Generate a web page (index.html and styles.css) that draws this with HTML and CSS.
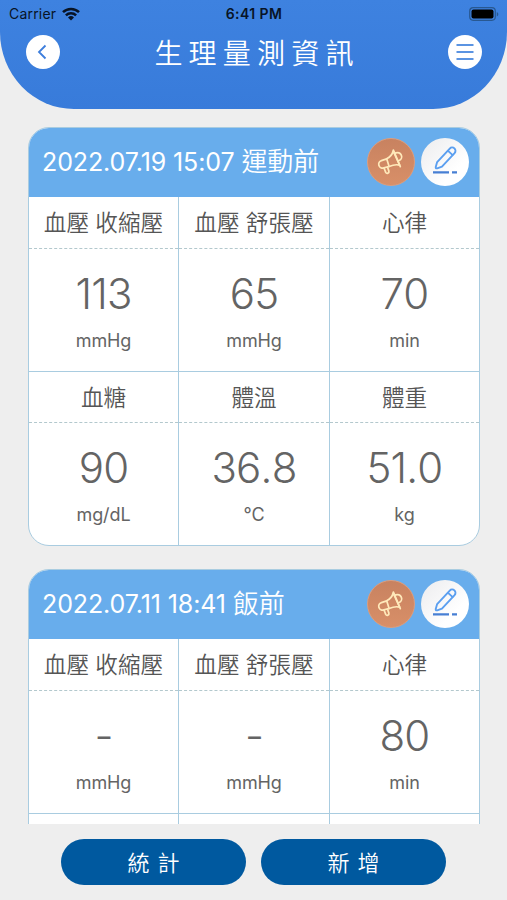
FILE: index.html
```html
<!DOCTYPE html>
<html lang="zh-Hant">

<head>
    <meta charset="utf-8">
    <meta name="viewport" content="width=device-width, initial-scale=1">
    <title>生理量測資訊</title>
    <link rel="stylesheet" href="styles.css">
</head>

<body>
    <svg class="defs" width="0" height="0">
        <symbol id="icon-horn" viewBox="0 0 48 48">
            <g fill="none" stroke="#ffe9ba" stroke-width="1.8" stroke-linejoin="round" stroke-linecap="round">
                <path d="M19.500 20.700l-5.500 1.800a4 4 0 0 0 2.500 7.700l5.500-1.500z" />
                <path d="M19.500 20.700c3.500-1.900 6-4.700 6.700-8.200L33 27.300c-3.500-1-7-.3-11 1.400" />
                <path d="M26.500 11.500l7.200 17.300M29 14.500a3.800 3.800 0 0 1 3.500 8" />
                <path d="M16.800 30.500l1.700 4.300c1 1.800 3.800.8 3.300-1.300l-1.500-4.300" />
            </g>
        </symbol>
        <symbol id="icon-edit" viewBox="0 0 48 48">
            <g transform="rotate(43 24 20.500)" fill="none" stroke="#5b9ff0" stroke-width="1.900" stroke-linejoin="round" stroke-linecap="round">
                <path d="M20.700 10a3.300 3.300 0 0 1 6.600 0v18.500l-2.300 4.500q-1 1.500-2 0l-2.300-4.500z" />
                <path d="M21 12.800h6" />
            </g>
            <path d="M12 34.300h16M31 34.300h5" fill="none" stroke="#477fd4" stroke-width="2.200" />
        </symbol>
    </svg>

    <header class="top">
        <div class="status">
            <span class="carrier">Carrier
                <svg width="18" height="14" viewBox="0 0 18 14">
                    <g fill="none" stroke="#081426" stroke-width="2.500">
                        <path d="M1 5.200a11.300 11.300 0 0 1 16 0" />
                        <path d="M3.900 8.300a7.200 7.200 0 0 1 10.200 0" />
                    </g>
                    <path d="M9 13.500l-3-3a4.300 4.300 0 0 1 6 0z" fill="#081426" />
                </svg>
            </span>
            <span class="time">6:41 PM</span>
            <svg class="battery" width="30" height="14" viewBox="0 0 30 14">
                <rect x=".7" y=".7" width="25.600" height="12.600" rx="3.500" fill="none" stroke="#285891" stroke-width="1.200" />
                <rect x="2.500" y="2.500" width="22" height="9" rx="2" fill="#000" />
                <path d="M27.800 5v4.500c2-.8 2-3.700 0-4.500" fill="#285891" />
            </svg>
        </div>
        <div class="bar">
            <button class="round" aria-label="back">
                <svg width="34" height="34" viewBox="0 0 34 34">
                    <path d="M19.500 10.500l-6.500 6.500 6.500 6.500" fill="none" stroke="#3d7edc" stroke-width="1.800" />
                </svg>
            </button>
            <h1>生理量測資訊</h1>
            <button class="round" aria-label="menu">
                <svg width="34" height="34" viewBox="0 0 34 34">
                    <path d="M8.500 10h17M8.500 17h17M8.500 24h17" fill="none" stroke="#5b94e2" stroke-width="2" />
                </svg>
            </button>
        </div>
    </header>

    <main class="list">
        <section class="card">
            <div class="card-head">
                <h2>2022.07.19 15:07 <span>運動前</span></h2>
                <button class="act horn" aria-label="horn"><svg><use href="#icon-horn" /></svg></button>
                <button class="act edit" aria-label="edit"><svg><use href="#icon-edit" /></svg></button>
            </div>
            <div class="grid">
                <div class="cell">
                    <div class="label">血壓 收縮壓</div>
                    <div class="value">113</div>
                    <div class="unit">mmHg</div>
                </div>
                <div class="cell">
                    <div class="label">血壓 舒張壓</div>
                    <div class="value">65</div>
                    <div class="unit">mmHg</div>
                </div>
                <div class="cell">
                    <div class="label">心律</div>
                    <div class="value">70</div>
                    <div class="unit">min</div>
                </div>
                <div class="cell">
                    <div class="label">血糖</div>
                    <div class="value">90</div>
                    <div class="unit">mg/dL</div>
                </div>
                <div class="cell">
                    <div class="label">體溫</div>
                    <div class="value">36.8</div>
                    <div class="unit">°C</div>
                </div>
                <div class="cell">
                    <div class="label">體重</div>
                    <div class="value">51.0</div>
                    <div class="unit">kg</div>
                </div>
            </div>
        </section>

        <section class="card">
            <div class="card-head">
                <h2>2022.07.11 18:41 <span>飯前</span></h2>
                <button class="act horn" aria-label="horn"><svg><use href="#icon-horn" /></svg></button>
                <button class="act edit" aria-label="edit"><svg><use href="#icon-edit" /></svg></button>
            </div>
            <div class="grid">
                <div class="cell">
                    <div class="label">血壓 收縮壓</div>
                    <div class="value">-</div>
                    <div class="unit">mmHg</div>
                </div>
                <div class="cell">
                    <div class="label">血壓 舒張壓</div>
                    <div class="value">-</div>
                    <div class="unit">mmHg</div>
                </div>
                <div class="cell">
                    <div class="label">心律</div>
                    <div class="value">80</div>
                    <div class="unit">min</div>
                </div>
                <div class="cell"></div>
                <div class="cell"></div>
                <div class="cell"></div>
            </div>
        </section>
    </main>

    <footer class="bottom">
        <button class="btn">統計</button>
        <button class="btn">新增</button>
    </footer>
</body>

</html>
```

FILE: styles.css
```css
* {
    box-sizing: border-box;
}

body {
    margin: 0;
    height: 900px;
    display: flex;
    flex-direction: column;
    overflow: hidden;
    background: #eee;
    color: #646464;
    font-family: Inter, "Noto Sans CJK TC", sans-serif;
}

h1,
h2 {
    margin: 0;
    font-weight: 350;
    color: #fff;
    white-space: nowrap;
}

button {
    border: 0;
    padding: 0;
    font-family: inherit;
}

svg {
    display: block;
}

.defs {
    position: absolute;
}

/* header */
.top {
    flex: none;
    height: 109px;
    background: linear-gradient(#3e82e0, #387bda);
    border-radius: 0 0 74px 74px / 0 0 77px 77px;
}

.status {
    height: 27px;
    padding: 0 8px 0 9px;
    display: grid;
    grid-template-columns: 1fr auto 1fr;
    align-items: center;
    color: #081426;
    font-size: 14px;
}

.carrier {
    display: flex;
    align-items: center;
    gap: 6px;
    letter-spacing: 0.2px;
}

.time {
    font-weight: 600;
    letter-spacing: 0.4px;
}

.battery {
    justify-self: end;
}

.bar {
    display: flex;
    align-items: flex-start;
    justify-content: space-between;
    padding: 8px 25px 0 26px;
}

.bar h1 {
    font-size: 28px;
    line-height: 34px;
    letter-spacing: 6.2px;
    padding: 2px 0 0 6px;
}

.round {
    width: 34px;
    height: 34px;
    border-radius: 50%;
    background: #fff;
}

/* records */
.list {
    flex: none;
    height: 715px;
    padding: 18px 27px 0 28px;
    overflow: hidden;
}

.card {
    margin-bottom: 23px;
    background: #fff;
    border: 1px solid #a9cce0;
    border-radius: 21px;
    overflow: hidden;
}

.card-head {
    display: flex;
    align-items: center;
    height: 69px;
    padding: 0 10px 2px 13px;
    background: #68adec;
}

.card-head h2 {
    flex: 1;
    font-size: 25px;
    font-weight: 400;
    letter-spacing: -0.1px;
    line-height: 36px;
    padding-top: 1px;
}

.card-head h2 span {
    font-size: 26px;
    font-weight: 350;
}

.act {
    width: 48px;
    height: 48px;
    border-radius: 50%;
}

.act svg {
    width: 100%;
    height: 100%;
}

.horn {
    margin-right: 6px;
    border: 1px solid #dc9d7c;
    background: linear-gradient(#c88260, #d88f68);
}

.edit {
    background: linear-gradient(135deg, #ececee, #fff 70%);
}

.grid {
    display: grid;
    grid-template-columns: 149px 151px 1fr;
    grid-auto-rows: 174px;
}

.cell {
    text-align: center;
    border-left: 1px solid #a9cce0;
}

.cell:nth-child(3n + 1) {
    border-left: 0;
}

.cell:nth-child(n + 4) {
    border-top: 1px solid #a9cce0;
}

.label {
    height: 52px;
    line-height: 52px;
    font-size: 22.6px;
    font-weight: 350;
    color: #555;
    border-bottom: 1px dashed #b3c8cd;
}

.cell:nth-child(n + 4) .label {
    height: 51px;
    line-height: 51px;
}

.value {
    padding-top: 20px;
    font-size: 42px;
    line-height: 50px;
    font-weight: 300;
    font-kerning: none;
    letter-spacing: -0.8px;
}

.unit {
    margin-top: 9px;
    font-size: 18px;
    line-height: 26px;
    letter-spacing: -0.1px;
}

/* footer */
.bottom {
    flex: 1;
    display: flex;
    justify-content: center;
    gap: 15px;
    padding-top: 15px;
}

.btn {
    width: 185px;
    height: 46px;
    padding-bottom: 2px;
    border-radius: 23px;
    background: #00599f;
    color: #fff;
    font-size: 22px;
    font-weight: 350;
    letter-spacing: 8px;
    text-indent: 8px;
}
```
